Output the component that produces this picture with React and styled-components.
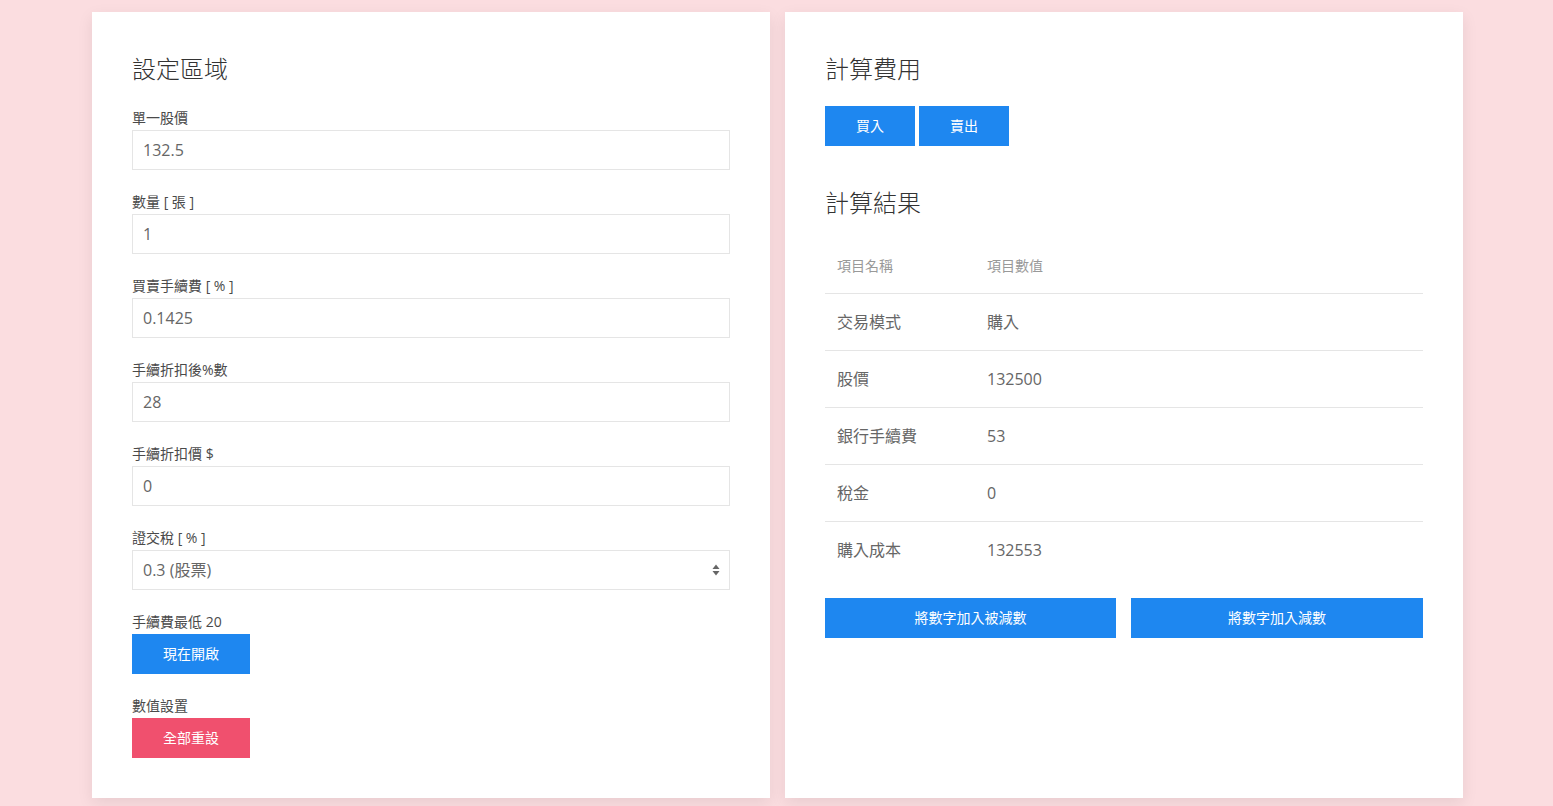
import React from 'react'
import styled, { createGlobalStyle } from 'styled-components'

const GlobalStyle = createGlobalStyle`
  html, body {
    margin: 0;
    padding: 0;
    background: #fbdde0;
    font-family: "Open Sans", "Noto Sans CJK TC", sans-serif;
    font-size: 16px;
    color: #666;
  }
  * { box-sizing: border-box; }
`

const Page = styled.div`
  display: grid;
  grid-template-columns: 678px 678px;
  gap: 15px;
  padding: 12px 0 8px 92px;
`

const Card = styled.div`
  background: #fff;
  padding: 40px;
  box-shadow: 0 5px 15px rgba(0, 0, 0, 0.08);
`

const Heading = styled.h3`
  margin: ${p => (p.$spaced ? '40px' : '0')} 0 20px;
  font-size: 24px;
  line-height: 33.6px;
  height: 33.6px;
  font-weight: 300;
  color: #333;
`

const Field = styled.div`
  margin-top: ${p => (p.$first ? '0' : '20px')};
`

const Label = styled.label`
  display: block;
  height: 23px;
  padding-top: 1px;
  font-size: 14px;
  line-height: 22px;
  color: #4a4a4a;
  margin-bottom: 1px;
`

const Input = styled.input`
  display: block;
  width: 100%;
  height: 40px;
  padding: 0 10px;
  border: 1px solid #e5e5e5;
  background: #fff;
  color: #666;
  font: inherit;
  font-size: 16px;
  outline: none;
`

const SelectWrap = styled.div`
  position: relative;
`

const Select = styled.select`
  display: block;
  width: 100%;
  height: 40px;
  padding: 0 10px;
  border: 1px solid #e5e5e5;
  background: #fff;
  color: #666;
  font: inherit;
  font-size: 16px;
  appearance: none;
  outline: none;
`

const SelectArrow = styled.svg`
  position: absolute;
  right: 10px;
  top: 13px;
  pointer-events: none;
`

const Button = styled.button`
  display: inline-block;
  height: 40px;
  padding: 0 30px;
  border: 1px solid transparent;
  background: ${p => (p.$danger ? '#f0506e' : '#1e87f0')};
  color: #fff;
  font: inherit;
  font-size: 14px;
  line-height: 38px;
  cursor: pointer;
`

const ButtonRow = styled.div`
  display: flex;
  gap: 4px;
`

const WideRow = styled.div`
  display: grid;
  grid-template-columns: 291px 292px;
  justify-content: space-between;
  margin-top: 20px;
`

const Table = styled.table`
  width: 100%;
  border-collapse: collapse;
`

const Th = styled.th`
  padding: 16px 12px;
  text-align: left;
  font-size: 14px;
  line-height: 22px;
  font-weight: 400;
  color: #999;
  width: ${p => p.$w || 'auto'};
  border-bottom: 1px solid #e5e5e5;
`

const Tr = styled.tr`
  & + & { border-top: 1px solid #e5e5e5; }
`

const Td = styled.td`
  padding: 16px 12px;
  font-size: 16px;
  line-height: 24px;
  color: #666;
`

const fields = [
  { label: '單一股價', value: '132.5' },
  { label: '數量 [ 張 ]', value: '1' },
  { label: '買賣手續費 [ % ]', value: '0.1425' },
  { label: '手續折扣後%數', value: '28' },
  { label: '手續折扣價 $', value: '0' },
]

const rows = [
  ['交易模式', '購入'],
  ['股價', '132500'],
  ['銀行手續費', '53'],
  ['稅金', '0'],
  ['購入成本', '132553'],
]

export default function App() {
  return (
    <>
      <GlobalStyle />
      <Page>
        <Card>
          <Heading>設定區域</Heading>
          {fields.map((f, i) => (
            <Field key={f.label} $first={i === 0}>
              <Label>{f.label}</Label>
              <Input defaultValue={f.value} />
            </Field>
          ))}
          <Field>
            <Label>證交稅 [ % ]</Label>
            <SelectWrap>
              <Select defaultValue="0.3">
                <option value="0.3">0.3 (股票)</option>
                <option value="0.1">0.1 (ETF)</option>
              </Select>
              <SelectArrow width="8" height="14" viewBox="0 0 8 14">
                <polygon points="4,1.5 7.5,6 0.5,6" fill="#666" />
                <polygon points="0.5,8 7.5,8 4,12.5" fill="#666" />
              </SelectArrow>
            </SelectWrap>
          </Field>
          <Field>
            <Label>手續費最低 20</Label>
            <Button>現在開啟</Button>
          </Field>
          <Field>
            <Label>數值設置</Label>
            <Button $danger>全部重設</Button>
          </Field>
        </Card>
        <Card>
          <Heading>計算費用</Heading>
          <ButtonRow>
            <Button>買入</Button>
            <Button>賣出</Button>
          </ButtonRow>
          <Heading $spaced>計算結果</Heading>
          <Table>
            <thead>
              <tr>
                <Th $w="150px">項目名稱</Th>
                <Th>項目數值</Th>
              </tr>
            </thead>
            <tbody>
              {rows.map(r => (
                <Tr key={r[0]}>
                  <Td>{r[0]}</Td>
                  <Td>{r[1]}</Td>
                </Tr>
              ))}
            </tbody>
          </Table>
          <WideRow>
            <Button>將數字加入被減數</Button>
            <Button>將數字加入減數</Button>
          </WideRow>
        </Card>
      </Page>
    </>
  )
}
